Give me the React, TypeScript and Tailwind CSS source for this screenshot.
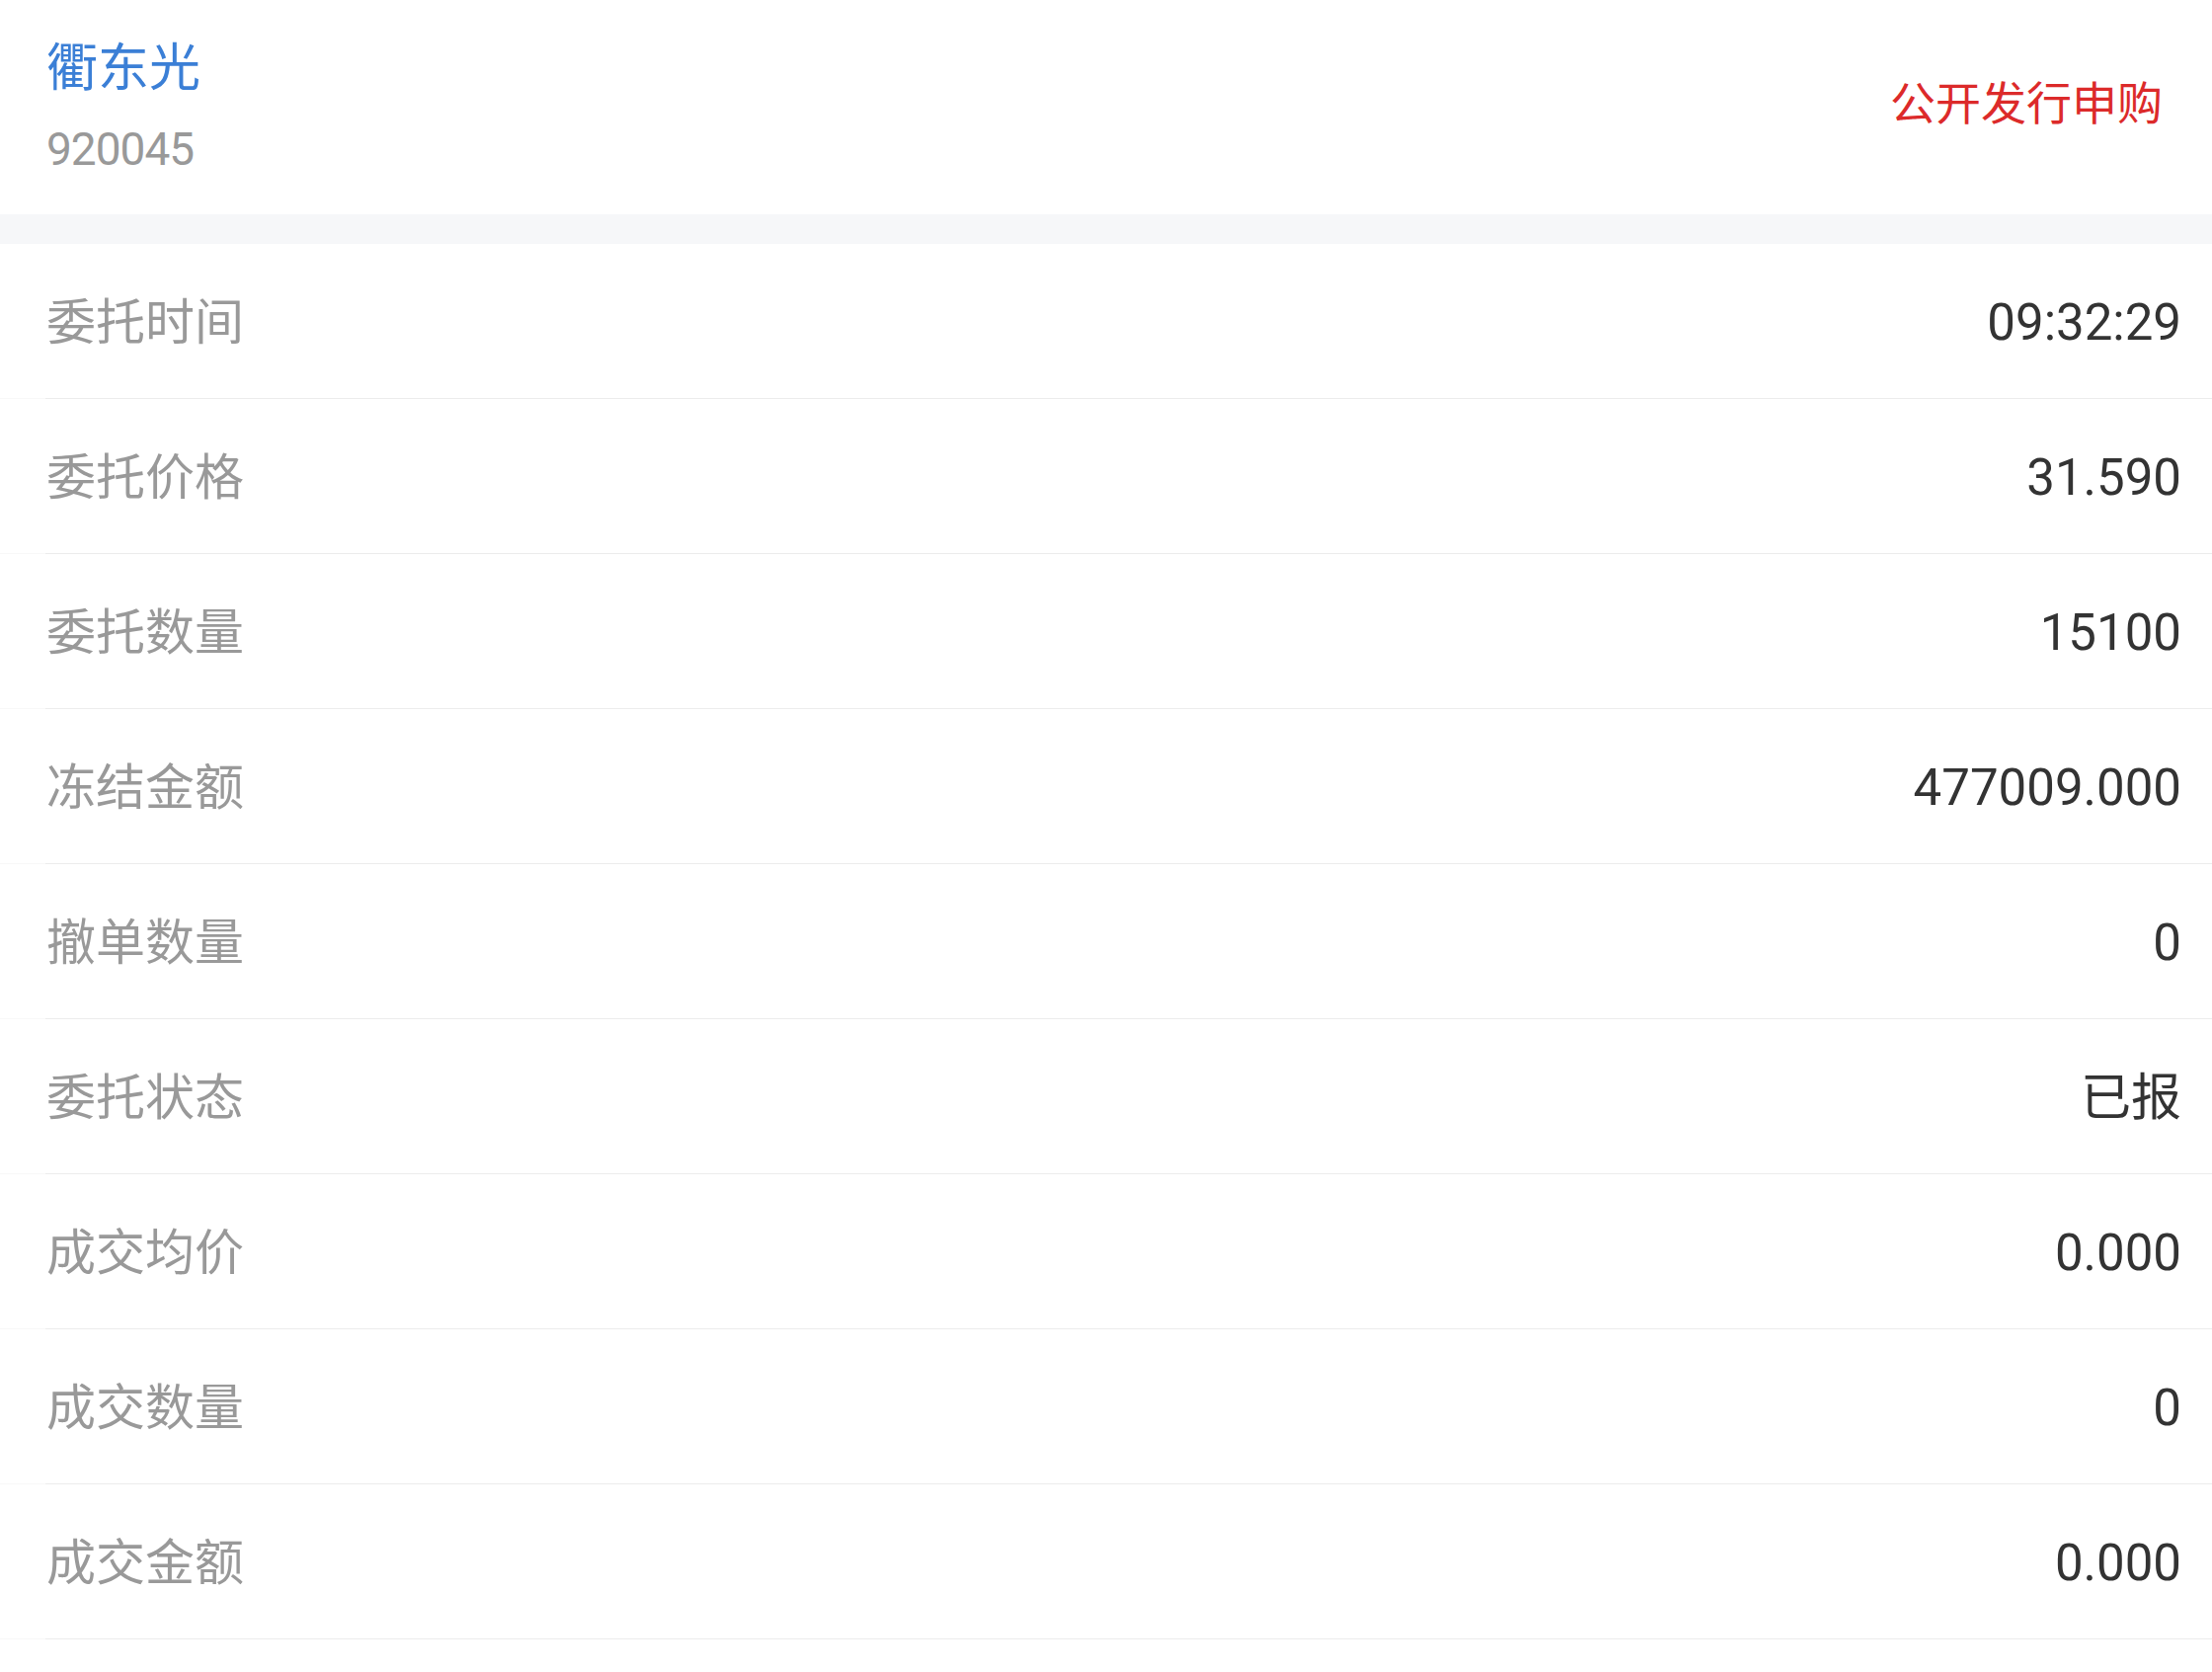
import React from "react";

const rows: [string, string][] = [
  ["委托时间", "09:32:29"],
  ["委托价格", "31.590"],
  ["委托数量", "15100"],
  ["冻结金额", "477009.000"],
  ["撤单数量", "0"],
  ["委托状态", "已报"],
  ["成交均价", "0.000"],
  ["成交数量", "0"],
  ["成交金额", "0.000"],
];

const font = { fontFamily: 'Roboto, "Noto Sans CJK SC", sans-serif' };

export default function App() {
  return (
    <div className="min-h-[1693px] w-full bg-white" style={font}>
      <div className="flex h-[217px] items-center justify-between pl-[47px] pr-[50px]">
        <div className="flex flex-col">
          <div className="text-[52px] leading-[60px] text-[#3b7fd6] -mt-[2px]">衢东光</div>
          <div className="mt-[26px] text-[46px] leading-[50px] tracking-[-1px] text-[#999999]">920045</div>
        </div>
        <div className="text-[46px] leading-[56px] text-[#dc2a2a] -mt-[8px]">公开发行申购</div>
      </div>
      <div className="h-[30px] bg-[#f6f7f9]" />
      {rows.map(([k, v]) => (
        <div key={k} className="flex flex-col">
          <div className="flex h-[156px] items-center justify-between pl-[47px] pr-[31px] pt-[5px]">
            <span className="text-[50px] text-[#999999]">{k}</span>
            <span className="text-[51px] text-[#333333]">{v}</span>
          </div>
          <div className="flex h-px">
            <div className="w-[46px] bg-[#f8f8f8]" />
            <div className="flex-1 bg-[#ececec]" />
          </div>
        </div>
      ))}
    </div>
  );
}
